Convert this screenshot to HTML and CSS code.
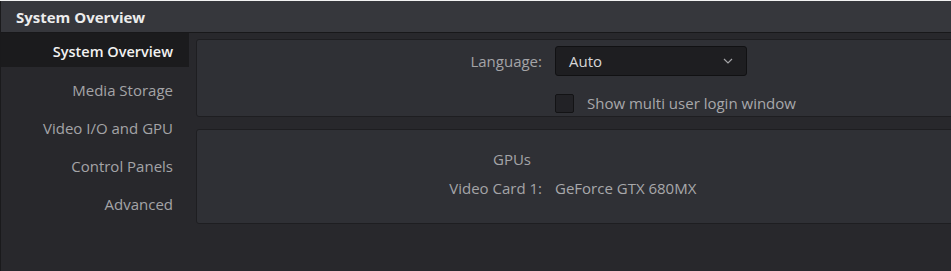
FILE: index.html
```html
<!DOCTYPE html>
<html>
<head>
    <title>System Overview</title>
    <link rel="stylesheet" href="styles.css">
</head>
<body>
    <div class="window">
        <div class="titlebar">System Overview</div>
        <div class="main">
            <ul class="sidebar">
                <li class="navItem active">System Overview</li>
                <li class="navItem">Media Storage</li>
                <li class="navItem">Video I/O and GPU</li>
                <li class="navItem">Control Panels</li>
                <li class="navItem">Advanced</li>
            </ul>
            <div class="content">
                <div class="panel generalPanel">
                    <div class="fieldLabel">Language:</div>
                    <div class="dropdown">
                        <span>Auto</span>
                        <svg width="10" height="6" viewBox="0 0 10 6">
                            <polyline points="1,1 5,5 9,1" fill="none" stroke="#a3a3a6" stroke-width="1.2" />
                        </svg>
                    </div>
                    <div></div>
                    <label class="checkRow">
                        <span class="checkbox"></span>
                        <span>Show multi user login window</span>
                    </label>
                </div>
                <div class="panel gpuPanel">
                    <div class="fieldLabel gpuHeading">GPUs</div>
                    <div></div>
                    <div class="fieldLabel">Video Card 1:</div>
                    <div class="fieldValue">GeForce GTX 680MX</div>
                </div>
            </div>
        </div>
    </div>
</body>
</html>
```

FILE: styles.css
```css
html, body {
    margin: 0;
    height: 100%;
    overflow: hidden;
    background-color: #f2f2f2;
}
body {
    font-family: "Open Sans", "DejaVu Sans", sans-serif;
    font-size: 15px;
    color: #a4a4a7;
}
.window {
    margin-top: 1px;
    height: 270px;
    background-color: #28282c;
    border-left: 1px solid #1a1a1c;
}
.titlebar {
    height: 31px;
    line-height: 32px;
    padding-left: 15px;
    background-color: #36373c;
    border-bottom: 1px solid #18181a;
    color: #ececec;
    font-size: 15px;
    font-weight: 700;
}
.main {
    display: flex;
}
.sidebar {
    list-style: none;
    margin: 0;
    padding: 0;
    width: 188px;
    flex: none;
}
.navItem {
    height: 34px;
    line-height: 38px;
    margin-bottom: 4px;
    padding-right: 16px;
    text-align: right;
}
.navItem.active {
    background-color: #1b1b1d;
    color: #f2f2f2;
    font-size: 14.5px;
    font-weight: 600;
}
.content {
    flex: 1;
    padding: 6px 0 0 7px;
}
.panel {
    width: 900px;
    background-color: #2f3035;
    border: 1px solid #1e1e21;
    border-radius: 3px;
    display: grid;
    grid-template-columns: 345px 1fr;
    column-gap: 13px;
    align-items: center;
}
.generalPanel {
    padding: 6px 0 3px;
    row-gap: 17px;
}
.gpuPanel {
    margin-top: 12px;
    padding: 15px 0 20px;
    line-height: 29px;
}
.fieldLabel {
    text-align: right;
}
.gpuHeading {
    padding-right: 11px;
}
.fieldValue {
    color: #a8a8ab;
}
.dropdown {
    height: 28px;
    width: 177px;
    padding-right: 13px;
    background-color: #1e1e21;
    border: 1px solid #111113;
    border-radius: 3px;
    display: flex;
    align-items: center;
    justify-content: space-between;
    color: #d6d6d8;
}
.dropdown span {
    padding-left: 13px;
}
.checkRow {
    display: flex;
    align-items: center;
    gap: 13px;
    color: #a8a8ab;
}
.checkbox {
    width: 17px;
    height: 17px;
    background-color: #222226;
    border: 1px solid #131315;
    border-radius: 2px;
}
```
